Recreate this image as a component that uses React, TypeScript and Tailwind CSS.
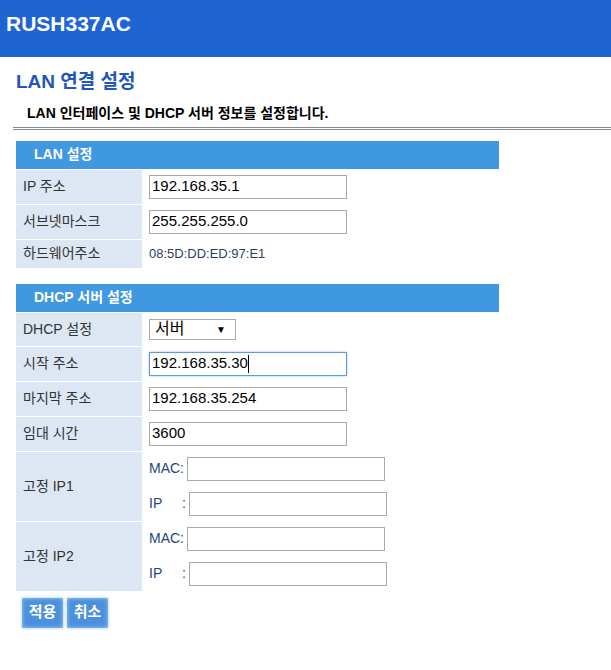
import React from 'react'

const font = { fontFamily: '"Liberation Sans", Arial, "Noto Sans CJK KR", sans-serif' }

function SectionHead({ title }: { title: string }) {
    return (
        <div className="h-[28px] bg-[#3f98e0] flex items-center pl-[18px] text-white font-bold text-[14px]">
            {title}
        </div>
    )
}

function Row({ label, h, children }: { label: string; h: string; children?: React.ReactNode }) {
    return (
        <div className={`flex mt-px ${h}`}>
            <div className="w-[126px] shrink-0 bg-[#dce7f3] flex items-center pl-[7px] text-[14px] text-[#333]">
                {label}
            </div>
            <div className="flex-1 flex items-center pl-[7px]">{children}</div>
        </div>
    )
}

function TextBox({ value, focus, w = 'w-[198px]' }: { value?: string; focus?: boolean; w?: string }) {
    return (
        <div
            className={`${w} h-[24px] flex items-center pl-[2px] text-[15px] text-black bg-white border ${
                focus ? 'border-[#5b9ae8] shadow-[0_0_2px_#8ab8f0]' : 'border-[#a9a9a9]'
            }`}
        >
            {value}
            {focus && <span className="w-px h-[18px] bg-black" />}
        </div>
    )
}

function FixedIp() {
    return (
        <div className="flex flex-col gap-[11px] text-[14px] text-[#26447c]">
            <div className="flex items-center">
                <span className="w-[38px]">MAC:</span>
                <TextBox />
            </div>
            <div className="flex items-center">
                <span className="w-[33px]">IP</span>
                <span className="w-[7px]">:</span>
                <TextBox />
            </div>
        </div>
    )
}

export default function App() {
    return (
        <div className="w-[611px] h-[670px] bg-white" style={font}>
            <div className="h-[57px] bg-[#1e65d2] flex items-start pt-[8px] pl-[6px]">
                <span className="text-white font-bold text-[21px]">RUSH337AC</span>
            </div>

            <div className="pl-[16px] pt-[11px] text-[19px] font-bold text-[#2257b8]">LAN 연결 설정</div>
            <div className="pl-[27px] pt-[6px] text-[14px] font-bold text-black">
                LAN 인터페이스 및 DHCP 서버 정보를 설정합니다.
            </div>
            <div className="ml-[13px] mt-[3px] h-[3px] border-y border-[#8a8a8a]" />

            <div className="ml-[16px] w-[483px] mt-[11px]">
                <SectionHead title="LAN 설정" />
                <Row label="IP 주소" h="h-[34px]">
                    <TextBox value="192.168.35.1" />
                </Row>
                <Row label="서브넷마스크" h="h-[34px]">
                    <TextBox value="255.255.255.0" />
                </Row>
                <Row label="하드웨어주소" h="h-[28px]">
                    <span className="text-[13px] text-[#2c3f60]">08:5D:DD:ED:97:E1</span>
                </Row>

                <div className="mt-[16px]">
                    <SectionHead title="DHCP 서버 설정" />
                </div>
                <Row label="DHCP 설정" h="h-[33px]">
                    <div className="w-[87px] h-[21px] border border-[#a9a9a9] flex items-center justify-between pl-[5px] pr-[9px] text-[16px] text-black">
                        <span>서버</span>
                        <span className="text-[10px]">▼</span>
                    </div>
                </Row>
                <Row label="시작 주소" h="h-[34px]">
                    <TextBox value="192.168.35.30" focus />
                </Row>
                <Row label="마지막 주소" h="h-[34px]">
                    <TextBox value="192.168.35.254" />
                </Row>
                <Row label="임대 시간" h="h-[34px]">
                    <TextBox value="3600" />
                </Row>
                <Row label="고정 IP1" h="h-[69px]">
                    <FixedIp />
                </Row>
                <Row label="고정 IP2" h="h-[69px]">
                    <FixedIp />
                </Row>
            </div>

            <div className="flex gap-[4px] ml-[22px] mt-[7px]">
                {['적용', '취소'].map((t) => (
                    <button
                        key={t}
                        className="w-[41px] h-[30px] bg-[#4a90dc] text-white font-bold text-[15px] shadow-[inset_0_0_4px_#a8d0f5,0_0_3px_#9cc8f0]"
                    >
                        {t}
                    </button>
                ))}
            </div>
        </div>
    )
}
